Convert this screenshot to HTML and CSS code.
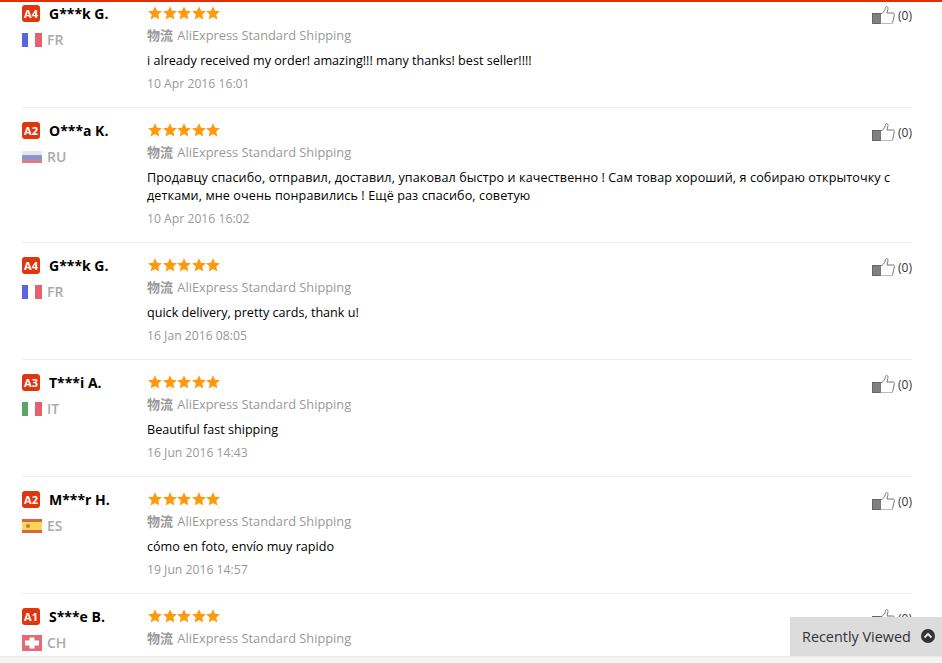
FILE: index.html
```html
<!DOCTYPE html>
<html lang="en">
<head>
    <meta charset="UTF-8">
    <meta name="viewport" content="width=device-width, initial-scale=1.0">
    <title>Feedback</title>
    <link rel="stylesheet" href="styles.css">
</head>
<body>
    <svg class="defs" width="0" height="0">
        <symbol id="star" viewBox="0 0 15 15"><path d="M7.5 .3l2.2 4.8 5.2 .6-3.9 3.5 1.1 5.2-4.6-2.6-4.6 2.6 1.1-5.2L.1 5.7l5.2-.6z"/></symbol>
        <symbol id="thumb" viewBox="0 0 23 18">
            <rect x=".5" y="7.500" width="8" height="10" fill="#808080" stroke="#666"/>
            <path d="M8.500 8c2.500 -1 4.500 -3 4.800 -5.500c.2 -1 .5 -2 1.300 -2c1.300 0 1.600 1.500 1.200 3l-.8 3.500h6c1 0 1.600 .7 1.400 1.700l-1.700 7.600c-.2 .7 -.7 1.700 -1.300 1.700H8.500z" fill="#fff" stroke="#777"/>
        </symbol>
        <symbol id="fr" viewBox="0 0 20 14"><rect width="6" height="14" fill="#5a64e0"/><rect x="6" width="7" height="14" fill="#fff"/><rect x="13" width="7" height="14" fill="#e8606e"/></symbol>
        <symbol id="it" viewBox="0 0 20 14"><rect width="6" height="14" fill="#5aa468"/><rect x="6" width="7" height="14" fill="#fff"/><rect x="13" width="7" height="14" fill="#e8606e"/></symbol>
        <symbol id="ru" viewBox="0 0 20 14"><rect y="1" width="20" height="4" fill="#e6e6ea"/><rect y="5" width="20" height="4" fill="#7f9bd0"/><rect y="9" width="20" height="4" fill="#d8808a"/></symbol>
        <symbol id="es" viewBox="0 0 20 14"><rect y="0" width="20" height="14" fill="#d9663c"/><rect y="3" width="20" height="8" fill="#f4d85a"/><circle cx="6" cy="7" r="2" fill="#c8783c"/></symbol>
        <symbol id="ch" viewBox="0 0 20 16"><rect width="20" height="16" fill="#e46a78"/><path d="M7.500 2.500h5v3h4.500v5h-4.500v3h-5v-3H3v-5h4.500z" fill="#fff"/></symbol>
    </svg>

    <main class="feedback-list">
        <article class="feedback first">
            <div class="buyer">
                <div class="buyer-name"><span class="level">A4</span><b>G***k G.</b></div>
                <div class="buyer-country"><svg class="flag"><use href="#fr"/></svg>FR</div>
            </div>
            <div class="content">
                <div class="stars"><svg><use href="#star"/></svg><svg><use href="#star"/></svg><svg><use href="#star"/></svg><svg><use href="#star"/></svg><svg><use href="#star"/></svg></div>
                <div class="shipping"><b class="cn">物流</b> AliExpress Standard Shipping</div>
                <p class="text">i already received my order! amazing!!! many thanks! best seller!!!!</p>
                <div class="date">10 Apr 2016 16:01</div>
            </div>
            <div class="useful"><svg class="thumb"><use href="#thumb"/></svg>(0)</div>
        </article>

        <article class="feedback">
            <div class="buyer">
                <div class="buyer-name"><span class="level">A2</span><b>O***a K.</b></div>
                <div class="buyer-country"><svg class="flag"><use href="#ru"/></svg>RU</div>
            </div>
            <div class="content">
                <div class="stars"><svg><use href="#star"/></svg><svg><use href="#star"/></svg><svg><use href="#star"/></svg><svg><use href="#star"/></svg><svg><use href="#star"/></svg></div>
                <div class="shipping"><b class="cn">物流</b> AliExpress Standard Shipping</div>
                <p class="text text-ru">Продавцу спасибо, отправил, доставил, упаковал быстро и качественно ! Сам товар хороший, я собираю открыточку с детками, мне очень понравились ! Ещё раз спасибо, советую</p>
                <div class="date">10 Apr 2016 16:02</div>
            </div>
            <div class="useful"><svg class="thumb"><use href="#thumb"/></svg>(0)</div>
        </article>

        <article class="feedback">
            <div class="buyer">
                <div class="buyer-name"><span class="level">A4</span><b>G***k G.</b></div>
                <div class="buyer-country"><svg class="flag"><use href="#fr"/></svg>FR</div>
            </div>
            <div class="content">
                <div class="stars"><svg><use href="#star"/></svg><svg><use href="#star"/></svg><svg><use href="#star"/></svg><svg><use href="#star"/></svg><svg><use href="#star"/></svg></div>
                <div class="shipping"><b class="cn">物流</b> AliExpress Standard Shipping</div>
                <p class="text">quick delivery, pretty cards, thank u!</p>
                <div class="date">16 Jan 2016 08:05</div>
            </div>
            <div class="useful"><svg class="thumb"><use href="#thumb"/></svg>(0)</div>
        </article>

        <article class="feedback">
            <div class="buyer">
                <div class="buyer-name"><span class="level">A3</span><b>T***i A.</b></div>
                <div class="buyer-country"><svg class="flag"><use href="#it"/></svg>IT</div>
            </div>
            <div class="content">
                <div class="stars"><svg><use href="#star"/></svg><svg><use href="#star"/></svg><svg><use href="#star"/></svg><svg><use href="#star"/></svg><svg><use href="#star"/></svg></div>
                <div class="shipping"><b class="cn">物流</b> AliExpress Standard Shipping</div>
                <p class="text">Beautiful fast shipping</p>
                <div class="date">16 Jun 2016 14:43</div>
            </div>
            <div class="useful"><svg class="thumb"><use href="#thumb"/></svg>(0)</div>
        </article>

        <article class="feedback">
            <div class="buyer">
                <div class="buyer-name"><span class="level">A2</span><b>M***r H.</b></div>
                <div class="buyer-country"><svg class="flag"><use href="#es"/></svg>ES</div>
            </div>
            <div class="content">
                <div class="stars"><svg><use href="#star"/></svg><svg><use href="#star"/></svg><svg><use href="#star"/></svg><svg><use href="#star"/></svg><svg><use href="#star"/></svg></div>
                <div class="shipping"><b class="cn">物流</b> AliExpress Standard Shipping</div>
                <p class="text">cómo en foto, envío muy rapido</p>
                <div class="date">19 Jun 2016 14:57</div>
            </div>
            <div class="useful"><svg class="thumb"><use href="#thumb"/></svg>(0)</div>
        </article>

        <article class="feedback">
            <div class="buyer">
                <div class="buyer-name"><span class="level">A1</span><b>S***e B.</b></div>
                <div class="buyer-country"><svg class="flag flag-ch"><use href="#ch"/></svg>CH</div>
            </div>
            <div class="content">
                <div class="stars"><svg><use href="#star"/></svg><svg><use href="#star"/></svg><svg><use href="#star"/></svg><svg><use href="#star"/></svg><svg><use href="#star"/></svg></div>
                <div class="shipping"><b class="cn">物流</b> AliExpress Standard Shipping</div>
            </div>
            <div class="useful"><svg class="thumb"><use href="#thumb"/></svg>(0)</div>
        </article>
    </main>

    <aside class="recent">
        Recently Viewed
        <svg class="recent-icon" viewBox="0 0 14 14"><circle cx="7" cy="7" r="7" fill="#333"/><path d="M3.500 8.500L7 5l3.500 3.500" fill="none" stroke="#e0e0e0" stroke-width="2"/></svg>
    </aside>
    <div class="page-bottom"></div>
</body>
</html>
```
FILE: styles.css
```css
html, body {
    height: 100%;
}
body {
    margin: 0;
    font-family: 'Open Sans', 'Noto Sans CJK SC', sans-serif;
    font-size: 12px;
    color: #000;
    background: #fff;
    border-top: 2px solid #e62e04;
    box-sizing: border-box;
    overflow: hidden;
}
.defs {
    display: block;
}
.feedback-list {
    padding: 0 30px 0 22px;
}
.feedback {
    display: flex;
    padding: 15px 0 14px;
    border-bottom: 1px solid #eee;
}
.feedback.first {
    padding-top: 4px;
}
.buyer {
    width: 125px;
    flex: none;
}
.buyer-name {
    display: flex;
    align-items: center;
    height: 14px;
    font-size: 14px;
}
.buyer-name b {
    margin-left: 9px;
}
.level {
    width: 18px;
    height: 17px;
    border-radius: 3px;
    background: #e0350f;
    color: #fff;
    font-size: 11px;
    font-weight: 700;
    line-height: 17px;
    text-align: center;
}
.buyer-country {
    display: flex;
    align-items: center;
    margin-top: 10px;
    color: #aaa;
    font-size: 14px;
    font-weight: 600;
}
.flag {
    width: 20px;
    height: 14px;
    margin-right: 5px;
}
.flag-ch {
    height: 16px;
}
.content {
    flex: 1;
}
.stars {
    display: flex;
    align-items: flex-start;
    gap: .6px;
    height: 15px;
    padding-left: 1px;
}
.stars svg {
    width: 14px;
    height: 14px;
    fill: #ff9a0e;
}
.shipping {
    margin-top: 5px;
    color: #999;
    font-size: 12.8px;
    line-height: 18px;
}
.shipping .cn {
    font-size: 13px;
    font-weight: 700;
    margin-right: 1px;
}
.text {
    margin: 8px 0 0;
    font-size: 12.6px;
    line-height: 18px;
    color: #000;
}
.text-ru {
    letter-spacing: .1px;
}
.date {
    margin-top: 5px;
    color: #999;
    font-size: 12.2px;
    line-height: 18px;
}
/* sits over the right end of the content column, long text runs under it */
.useful {
    display: flex;
    align-items: center;
    flex: none;
    height: 18px;
    margin-left: -41px;
    color: #333;
}
.thumb {
    width: 23px;
    height: 18px;
    margin-right: 3px;
}
.recent {
    position: fixed;
    right: 0;
    bottom: 6px;
    display: flex;
    align-items: center;
    justify-content: space-between;
    box-sizing: border-box;
    width: 152px;
    height: 40px;
    padding: 0 7px 2px 12px;
    background: #dcdcdc;
    color: #333;
    font-size: 14.4px;
}
.recent-icon {
    width: 14px;
    height: 14px;
}
.page-bottom {
    position: fixed;
    left: 0;
    right: 0;
    bottom: 0;
    height: 6px;
    background: #f4f4f4;
    border-top: 1px solid #e8e8e8;
}
```
